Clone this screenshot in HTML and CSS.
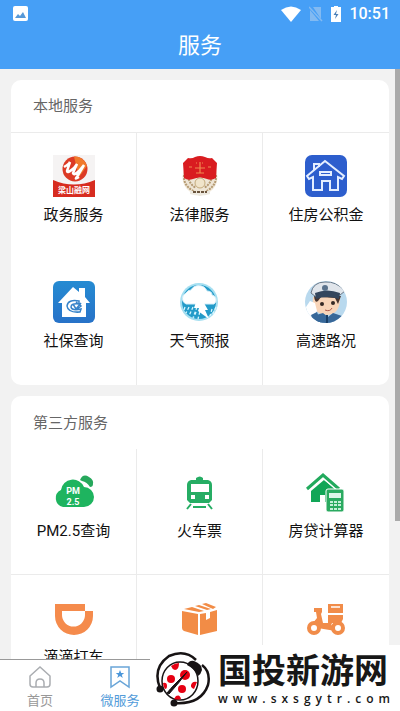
FILE: index.html
```html
<!DOCTYPE html>
<html lang="zh-CN">
<head>
<meta charset="utf-8">
<meta name="viewport" content="width=device-width, initial-scale=1">
<title>服务</title>
<link rel="stylesheet" href="styles.css">
</head>
<body>
<header class="header">
  <div class="status">
    <svg width="15" height="15" viewBox="0 0 15 15"><rect width="15" height="15" rx="2" fill="#fff"/><path d="M2 12l3-4 2 2 3-4 3 6z" fill="#5799d8"/></svg>
    <div class="status-right">
      <svg width="20" height="16" viewBox="0 0 20 16"><path d="M0 4Q10-3 20 4L10 16z" fill="#fff"/></svg>
      <svg width="14" height="16" viewBox="0 0 14 16"><path d="M4 1h8v12zM1 4v11h9z" fill="#82baf2"/><path d="M0 1l13 14" stroke="#82baf2" stroke-width="1.5"/></svg>
      <svg width="10" height="16" viewBox="0 0 10 16"><path d="M3 0h4v1h3v15H0V1h3z" fill="#fff"/><path d="M6 4L2.500 9H5l-1 4 3.500-5H5z" fill="#4a7fb8"/></svg>
      <span class="time">10:51</span>
    </div>
  </div>
  <h1 class="title">服务</h1>
</header>

<main class="content">
  <section class="card">
    <h2 class="card-title ruled">本地服务</h2>
    <div class="grid">
      <a class="cell" href="#">
        <svg class="icon" viewBox="0 0 42 42"><rect width="42" height="42" fill="#f5f3f3"/><path d="M0 25Q21 34 42 25V42H0z" fill="#d72c20"/><circle cx="22" cy="14" r="12.500" fill="#dc3a25"/><path d="M21 1.500A12.500 12.500 0 0 1 34 11L26 22 23 10z" fill="#f17a2b"/><path d="M11 12q5-3 6-5l-3 9q0 3 7-3l3-4-4 9q1 3 6-2l5-6-7 12q-3 3 2 0" fill="none" stroke="#fff" stroke-width="2.500"/><text class="badge-text" x="21" y="38" text-anchor="middle">梁山融网</text></svg>
        <span>政务服务</span>
      </a>
      <a class="cell" href="#">
        <svg class="icon" viewBox="0 0 42 42"><path d="M5 15Q0 30 13 38l8 3 8-3Q42 30 37 15z" fill="#eee5d5"/><path d="M5 20q-1 11 11 17M37 20q1 11-11 17M9 21q1 8 8 12M33 21q-1 8-8 12" fill="none" stroke="#b59a72" stroke-width="2" stroke-dasharray="2 1"/><path d="M9 3q4 1 7-1 5-2 10 0 4 2 7 1l5 5-1 15q-5 3-9 1-7-3-14 0-5 2-9-1L4 8z" fill="#d91c20"/><path d="M10 12h3m4-4h1m5 0h1m5 4h3M16 13h10M21 7v11m-4 0h8" stroke="#f08a50" stroke-width="1.200"/><circle cx="21" cy="28" r="5" fill="#f0e4ca" stroke="#c4aa7c"/><path d="M11 35q10 5 20 0v4q-10 3-20 0z" fill="#ede9df"/><path d="M14 37h14" stroke="#69533c" stroke-width="2" stroke-dasharray="3 1"/></svg>
        <span>法律服务</span>
      </a>
      <a class="cell" href="#">
        <svg class="icon" viewBox="0 0 42 42"><rect width="42" height="42" rx="7" fill="#2d5ecd"/><g fill="none" stroke="#e4eeff" stroke-width="2"><path d="M2 21L20 6l19 15-2 3-4-2v13h-8v-9h-8v9H8V22l-4 2z"/><path d="M9 15V9h5v3M15 17h11v3H15z"/></g></svg>
        <span>住房公积金</span>
      </a>
      <a class="cell" href="#">
        <svg class="icon" viewBox="0 0 42 42"><defs><linearGradient id="sky" x2="0" y2="1"><stop stop-color="#258bd2"/><stop offset="1" stop-color="#2772c8"/></linearGradient></defs><rect width="42" height="42" rx="6" fill="url(#sky)"/><path d="M20 6l6 5V7h6v9l5 6h-4v14H9V22H5z" fill="#fff"/><path d="M26 20q-11-2-12 5 1 7 13 6l1-3q-9 2-10-2 0-4 8-3zm-3 1l5 4-5 4M20 23l3 5 5-6" fill="none" stroke="#3683c9" stroke-width="1.500"/></svg>
        <span>社保查询</span>
      </a>
      <a class="cell" href="#">
        <svg class="icon" viewBox="0 0 42 42"><circle cx="20" cy="21" r="19" fill="#a5dff1"/><circle cx="20" cy="21" r="17" fill="#239bc9"/><path d="M6 26l-1 3m5-3l-3 6m7-6l-4 9m8-9l-4 11m8-11l-3 12m14-10l-2 7m6-9l-3 7m-17-2l-2 5" stroke="#d7f6ff" stroke-width="1.300" stroke-dasharray="3 2"/><path d="M7 23a6 6 0 0 1 0-11 6 6 0 0 1 5-3 9 9 0 0 1 16 1q5 0 5 4a5 5 0 0 1 2 9z" fill="#fff" stroke="#d6effa"/><path d="M17 21l-2 6h5l-1 3 11 8-4-9h3l-4-7z" fill="#fff"/></svg>
        <span>天气预报</span>
      </a>
      <a class="cell" href="#">
        <svg class="icon" viewBox="0 0 42 42"><defs><clipPath id="disc"><circle cx="21" cy="21" r="21"/></clipPath></defs><g clip-path="url(#disc)"><path fill="#b9d9ee" d="M0 0h42v42H0z"/><path d="M8 16q-2 17 14 18 14-1 13-19z" fill="#f8d5b9"/><path d="M9 15q1 8 4 5l3-4 14 1 3 6 3-8z" fill="#463530"/><path d="M6 12Q8 1 20 1q11-1 20 9l-5 4q-12-4-24 2z" fill="#e0e5eb" stroke="#697787"/><path d="M10 12q12-5 25 0l-1 6q-12-4-23 0z" fill="#34465d"/><circle cx="20" cy="7" r="3" fill="#59728c"/><circle cx="17" cy="23" r="2" fill="#352925"/><circle cx="28" cy="22" r="2" fill="#352925"/><path d="M20 29q5 2 7-2" fill="none" stroke="#ad594b"/><path d="M11 34l7-2 5 4 5-4 9 3 1 7H9z" fill="#386899"/><path d="M1 26l4-6 5 2 2 8-4 6-6-3z" fill="#fff"/><path d="M6 34l6-3 4 11H9z" fill="#386899"/><path d="M22 34v8" stroke="#193f67" stroke-width="2"/></g></svg>
        <span>高速路况</span>
      </a>
    </div>
  </section>

  <section class="card">
    <h2 class="card-title">第三方服务</h2>
    <div class="grid lined">
      <a class="cell" href="#">
        <svg class="icon" viewBox="0 0 42 42"><path d="M27 9q3-7 9-3 5 3 4 7 0 3-3 3-3-5-8-6z" fill="#26a85c"/><path d="M10 36A9 9 0 0 1 8 19a12 12 0 0 1 23-3 10 10 0 0 1 0 20z" fill="#1eb45f"/><text class="pm-text" x="20" y="23" text-anchor="middle">PM</text><text class="pm-text" x="20" y="34" text-anchor="middle">2.5</text></svg>
        <span>PM2.5查询</span>
      </a>
      <a class="cell" href="#">
        <svg class="icon" viewBox="0 0 42 42"><path fill-rule="evenodd" d="M12 9h5V7q4-3 7 0v2h5q4 1 4 5v15l-3 3H11l-3-3V14q0-4 4-5zm0 4v8h18v-8zm0 11v4h4v-4zm14 0v4h4v-4z" fill="#26ad64"/><path d="M12 33l-4 5m21-5l4 5M14 36h13" stroke="#26ad64" stroke-width="2"/></svg>
        <span>火车票</span>
      </a>
      <a class="cell" href="#">
        <svg class="icon" viewBox="0 0 42 42"><path d="M6 20l13-11 14 11v11H6z" fill="#11a657"/><path d="M2 18L18 4l16 14" fill="none" stroke="#fff" stroke-width="6"/><path d="M2 18L18 4l16 14" fill="none" stroke="#22aa5d" stroke-width="3"/><path d="M15 24h5v9h-5z" fill="#fff"/><rect x="21" y="18" width="18" height="23" rx="2" fill="#2aaa60" stroke="#fff"/><path d="M24 22h12v5H24z" fill="#ddf5e8"/><path d="M25 31h11m-11 3h11m-11 4h11" stroke="#c4efd9" stroke-width="2" stroke-dasharray="3 1"/></svg>
        <span>房贷计算器</span>
      </a>
      <a class="cell" href="#">
        <svg class="icon" viewBox="0 0 42 42"><path d="M2 7h30v7h8v5a19 19 0 0 1-38 0zm7 7v4a11.500 11.500 0 0 0 23 0v-4z" fill="#f58b4c" fill-rule="evenodd"/></svg>
        <span>滴滴打车</span>
      </a>
      <a class="cell" href="#">
        <svg class="icon" viewBox="0 0 42 42"><path d="M3 14l16 3v21L5 34q-2-1-2-3zm18 3l6-1v7l4-2v-6l7-2v21l-17 4zM5 12l8-2 12 4-5 1zm11-3l4-1 12 4-4 1zm7-2l4-1 10 4-3 2z" fill="#f28c46"/></svg>
      </a>
      <a class="cell" href="#">
        <svg class="icon" viewBox="0 0 42 42"><rect x="23" y="7" width="15" height="9" fill="#f18c49"/><path d="M26 10h9" stroke="#fff" stroke-width="1.500"/><path d="M23 18h15v4l-2 4h-9l-2 5H12l-5-4 5-6-1-6H9v-4h8v4l-1 2 2 9h5z" fill="#f18c49"/><path d="M10 28l18 3" stroke="#f18c49" stroke-width="5"/><g fill="#fff" stroke="#f18c49" stroke-width="4"><circle cx="9" cy="31" r="5"/><circle cx="33" cy="31" r="5"/></g></svg>
      </a>
    </div>
  </section>
  <div class="scrollbar"></div>
</main>

<nav class="tabs">
  <a class="tab" href="#"><svg width="24" height="24" viewBox="0 0 24 24" fill="none" stroke="#aaadb1" stroke-width="1.500"><path d="M2 11L12 2l10 9v8q0 3-3 3H5q-3 0-3-3zM8 22v-4q0-4 4-4t4 4v4"/></svg><span>首页</span></a>
  <a class="tab active" href="#"><svg width="24" height="24" viewBox="0 0 24 24"><path d="M3 2h18v20l-9-6-9 6z" fill="none" stroke="#69a5d8" stroke-width="1.500"/><path d="M12 5l1.200 3h3l-2.400 2 1 3-2.800-2-2.800 2 1-3-2.400-2h3z" fill="#4c97da"/></svg><span>微服务</span></a>
</nav>

<aside class="watermark">
  <svg class="bug" width="58" height="58" viewBox="0 0 58 58"><ellipse cx="27" cy="30" rx="18" ry="19" fill="#fff" stroke="#171314" stroke-width="1.500"/><path d="M34 14q2-5 7-4 8 3 8 9-1 4-4 6-3-7-11-11z" fill="#171314"/><g fill="#e60012"><circle cx="32" cy="24" r="5"/><circle cx="18" cy="28" r="4"/><circle cx="29" cy="38" r="4"/><path d="M18 15q4-3 8-3 0 7-4 7-3-1-4-4zM44 31l-3 7q-5-2-2-6 2-2 5-1zM10 32q4-1 4 3 0 3-2 3-2-3-2-6zM23 45q4-2 5 3-4 1-7 0z"/></g><path d="M14 42q4-5 7-8l13-13q-8 11-18 22z" fill="#171314" stroke="#171314"/><path d="M7 37Q-1 17 16 5 32-2 43 9M49 14q9 7 6 20-7 20-34 18" fill="none" stroke="#171314" stroke-width="2.500"/><circle cx="7" cy="38" r="3.500" fill="#171314"/><circle cx="21" cy="52" r="3.500" fill="#171314"/></svg>
  <div class="brand">
    <strong class="brand-name">国投新游网</strong>
    <span class="brand-url">www.sxsgytr.com</span>
  </div>
</aside>
</body>
</html>
```
FILE: styles.css
```css
* { box-sizing: border-box; }

body {
  margin: 0;
  height: 100vh;
  display: flex;
  flex-direction: column;
  overflow: hidden;
  position: relative;
  background: #f2f2f2;
  color: #111;
  font-family: Roboto, "Noto Sans CJK SC", sans-serif;
}

a { color: inherit; text-decoration: none; }
svg { display: block; flex: none; }

.header { background: #469ff6; color: #fff; padding-bottom: 4px; }

.status {
  display: flex;
  justify-content: space-between;
  align-items: center;
  height: 27px;
  padding: 0 10px 0 13px;
}

.status-right { display: flex; align-items: center; gap: 8px; }
.time { font-size: 16px; line-height: 20px; font-weight: 500; }

.title {
  margin: 0;
  font-size: 22px;
  line-height: 38px;
  font-weight: 400;
  text-align: center;
}

.content {
  flex: 1;
  min-height: 0;
  overflow: hidden;
  position: relative;
  display: flex;
  flex-direction: column;
  gap: 11px;
  padding: 11px 11px 0;
}

.card { flex: none; background: #fff; border-radius: 10px; overflow: hidden; }

.card-title {
  margin: 0;
  padding: 1px 22px 0;
  font-size: 15px;
  line-height: 52px;
  font-weight: 400;
  color: #666;
}

.ruled { border-bottom: 1px solid #ebebeb; line-height: 51px; }

.grid { display: grid; grid-template-columns: repeat(3, 1fr); }

.cell {
  display: flex;
  flex-direction: column;
  align-items: center;
  gap: 6px;
  height: 126px;
  padding-top: 22px;
  border-right: 1px solid #ebebeb;
  font-size: 15px;
  line-height: 24px;
}

.cell:nth-child(3n) { border-right: 0; }
.lined .cell { border-bottom: 1px solid #ebebeb; }
.icon { width: 42px; height: 42px; }
.badge-text { font-size: 8px; font-weight: 700; fill: #fff; }
.pm-text { font-size: 9px; font-weight: 700; fill: #fff; }

.scrollbar {
  position: absolute;
  top: 0;
  right: 0;
  width: 5px;
  height: 452px;
  background: #aaa;
}

.tabs {
  display: grid;
  grid-template-columns: repeat(5, 1fr);
  height: 52px;
  padding-top: 5px;
  border-top: 1px solid #999;
  background: #fff;
}

.tab {
  display: flex;
  flex-direction: column;
  align-items: center;
  font-size: 13px;
  line-height: 24px;
  color: #999;
}

.active { color: #529bd9; }

.watermark {
  position: absolute;
  right: 0;
  bottom: 0;
  display: flex;
  gap: 7px;
  width: 250px;
  height: 66px;
  padding: 6px 4px 0 3px;
  background: #fff;
  color: #171717;
}

.brand { display: flex; flex-direction: column; }
.brand-name { font-size: 34px; line-height: 40px; font-weight: 700; }

.brand-url {
  font-family: "Open Sans", sans-serif;
  font-size: 12px;
  line-height: 16px;
  font-weight: 600;
  letter-spacing: 5px;
}
```
